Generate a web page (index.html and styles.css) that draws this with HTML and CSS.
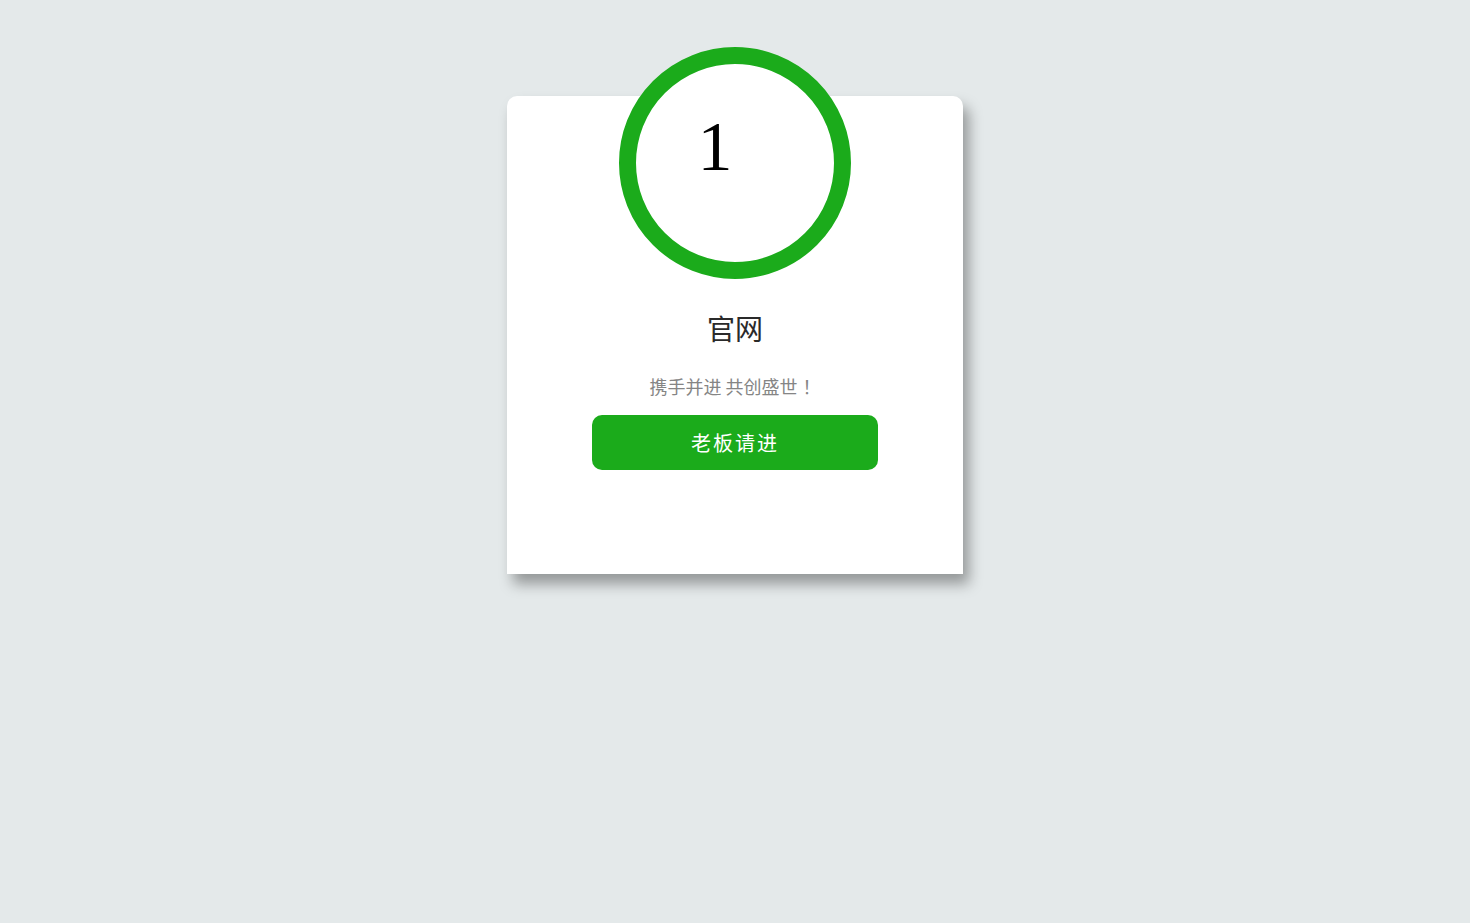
FILE: index.html
```html
<!DOCTYPE html>
<html lang="zh-CN">
<head>
  <meta charset="UTF-8" />
  <meta name="viewport" content="width=device-width, initial-scale=1.0" />
  <title>官网</title>
  <link rel="stylesheet" href="styles.css">
</head>
<body>
  <div class="card">
    <div class="ring">
      <span class="count">1</span>
    </div>
    <h1 class="title">官网</h1>
    <p class="slogan">携手并进 共创盛世<span class="bang">！</span></p>
    <button class="enter">老板请进</button>
  </div>
</body>
</html>
```
FILE: styles.css
```css
body {
  margin: 0;
  padding: 0;
  background-color: #e4e9ea;
  font-family: "Liberation Sans", "Noto Sans CJK SC", sans-serif;
  display: flex;
  flex-direction: column;
  align-items: center;
  min-height: 100vh;
}
.card {
  margin-top: 96px;
  width: 456px;
  height: 478px;
  background: #fff;
  border-radius: 10px 10px 0 0;
  box-shadow: 6px 10px 14px rgba(0, 0, 0, 0.35);
  display: flex;
  flex-direction: column;
  align-items: center;
  box-sizing: border-box;
}
.ring {
  margin-top: -49px;
  width: 232px;
  height: 232px;
  border: 17px solid #1bab1b;
  border-radius: 50%;
  background: #fff;
  box-sizing: border-box;
  display: flex;
  justify-content: center;
  padding-right: 40px;
}
.count {
  font-family: "Liberation Serif", serif;
  font-size: 70px;
  line-height: 1;
  margin-top: 48px;
  color: #000;
}
.title {
  margin: 35px 0 0;
  font-size: 28px;
  font-weight: normal;
  line-height: 34px;
  color: #2a2a2a;
}
.slogan {
  margin: 26px 0 0;
  font-family: "Noto Sans CJK SC", sans-serif;
  font-size: 18px;
  line-height: 24px;
  color: #858585;
}
.bang {
  margin-left: 5px;
}
.enter {
  margin-top: 17px;
  width: 286px;
  height: 55px;
  border: none;
  border-radius: 10px;
  background-color: #1bab1b;
  color: #fff;
  font-family: "Liberation Sans", "Noto Sans CJK SC", sans-serif;
  font-size: 20px;
  letter-spacing: 2px;
  cursor: pointer;
}
```
